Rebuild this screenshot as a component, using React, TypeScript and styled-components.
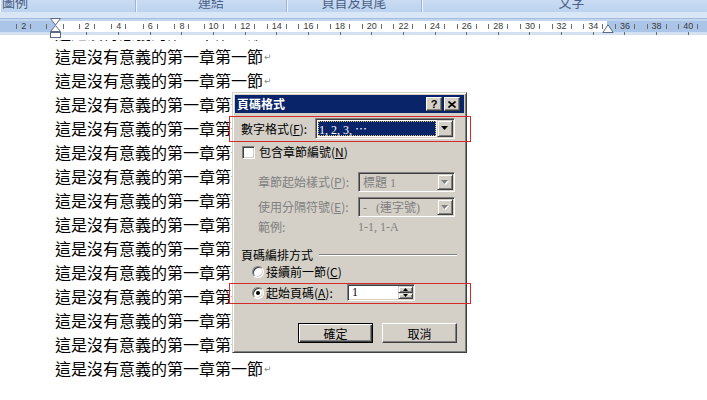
import React from "react";
import styled, { createGlobalStyle } from "styled-components";

const GlobalStyle = createGlobalStyle`
  html, body { margin: 0; padding: 0; background: #fff; }
  body { width: 707px; height: 400px; overflow: hidden; font-family: "Noto Sans CJK TC", sans-serif; }
`;

const Screen = styled.div`
  position: relative;
  width: 707px;
  height: 400px;
  overflow: hidden;
  background: #fff;
  display: flex;
  flex-direction: column;
`;

/* ---------- header: tab strip + ruler ---------- */
const Header = styled.div`
  position: relative;
  z-index: 2;
  flex: none;
  background: #fff;
`;

const TabBar = styled.div`
  display: flex;
  height: 12px;
  background: linear-gradient(#cadcf3, #bcd2ee);
`;

const Tab = styled.div<{ $w: number; $start?: boolean }>`
  flex: 0 0 ${(p) => p.$w}px;
  box-sizing: border-box;
  display: flex;
  align-items: flex-end;
  justify-content: ${(p) => (p.$start ? "flex-start" : "center")};
  padding-left: ${(p) => (p.$start ? 2 : 0)}px;
  border-right: 1px solid #9ab3d6;
  box-shadow: inset 1px 0 0 #eef4fc;
  overflow: hidden;
`;

const TabLabel = styled.span`
  font-size: 13px;
  line-height: 13px;
  margin-bottom: 4px;
  color: #4a5f86;
  white-space: nowrap;
`;

const SubBand = styled.div`
  height: 6px;
  background: #d9e6f6;
`;

const Ruler = styled.div`
  height: 17px;
  box-sizing: border-box;
  border-top: 1px solid #a2bce0;
  padding-top: 2px;
  background: #c2d6f0;
`;

const Track = styled.div`
  height: 11px;
  display: flex;
  padding-left: 7.9px;
  background: linear-gradient(
    to right,
    #abc5e9 0 55px,
    #ffffff 55px 607px,
    #abc5e9 607px
  );
`;

const TickRow = styled.div`
  height: 3px;
  display: flex;
  padding-left: 7.9px;
  background: #d3e1f3;
`;

const PageTop = styled.div`
  height: 5px;
  background: #fff;
`;

const Cell = styled.div`
  flex: 0 0 31.65px;
  display: flex;
  align-items: center;
  justify-content: center;
  gap: 4px;
`;

const Num = styled.span`
  font-family: "Liberation Sans", Arial, sans-serif;
  font-size: 9px;
  line-height: 11px;
  color: #3a3a3a;
`;

const Tick = styled.span<{ $h?: number }>`
  width: 1px;
  height: ${(p) => p.$h ?? 5}px;
  background: #6b6b6b;
`;

const MarkerSvg = styled.svg<{ $left: number; $top: number }>`
  position: absolute;
  left: ${(p) => p.$left}px;
  top: ${(p) => p.$top}px;
  z-index: 3;
`;

/* ---------- document ---------- */
const Document = styled.div`
  flex: 1;
  overflow: hidden;
  position: relative;
  z-index: 1;
`;

const Lines = styled.div`
  margin-top: -20px;
  padding-left: 55px;
`;

const Line = styled.div`
  height: 24px;
  font-family: "Noto Sans CJK TC", sans-serif;
  font-size: 16px;
  line-height: 24px;
  color: #000;
  white-space: nowrap;
`;

const Pilcrow = styled.span`
  font-family: "DejaVu Sans", sans-serif;
  font-size: 9px;
  color: #8a8a8a;
  vertical-align: 3px;
  margin-left: 1px;
`;

/* ---------- dialog ---------- */
const Dialog = styled.div`
  position: absolute;
  left: 232px;
  top: 92px;
  width: 235px;
  height: 261px;
  box-sizing: border-box;
  z-index: 4;
  background: #d4d0c8;
  border: 1px solid;
  border-color: #d4d0c8 #404040 #404040 #d4d0c8;
  box-shadow: inset 1px 1px #fff, inset -1px -1px #808080;
  padding: 2px;
  display: flex;
  flex-direction: column;
  font-family: "Noto Sans CJK TC", sans-serif;
  font-size: 12px;
  color: #000;
`;

const TitleBar = styled.div`
  height: 18px;
  flex: none;
  background: #0a246a;
  display: flex;
  align-items: center;
  padding: 0 4px 0 2px;
`;

const TitleText = styled.span`
  flex: 1;
  color: #fff;
  font-weight: bold;
  font-size: 12px;
  line-height: 14px;
`;

const CapButton = styled.div<{ $gap?: number }>`
  width: 16px;
  height: 14px;
  box-sizing: border-box;
  margin-left: ${(p) => p.$gap ?? 0}px;
  background: #d4d0c8;
  border: 1px solid;
  border-color: #fff #404040 #404040 #fff;
  box-shadow: inset -1px -1px #808080;
  display: flex;
  align-items: center;
  justify-content: center;
  font-family: "Liberation Sans", Arial, sans-serif;
  font-weight: bold;
  font-size: 11px;
  line-height: 11px;
`;

const Body = styled.div`
  flex: 1;
  display: flex;
  flex-direction: column;
  padding: 0 7px 0 6px;
`;

const Row = styled.div<{ $mt: number; $h: number; $indent?: number; $end?: boolean }>`
  flex: none;
  display: flex;
  align-items: center;
  justify-content: ${(p) => (p.$end ? "flex-end" : "flex-start")};
  margin-top: ${(p) => p.$mt}px;
  height: ${(p) => p.$h}px;
  padding-left: ${(p) => p.$indent ?? 0}px;
`;

const Label = styled.span<{ $w?: number; $disabled?: boolean }>`
  ${(p) => (p.$w ? `width: ${p.$w}px; flex: none;` : "")}
  color: ${(p) => (p.$disabled ? "#808080" : "#000")};
  white-space: nowrap;
  font-size: 12px;
  line-height: 14px;
`;

const SerifText = styled.span<{ $disabled?: boolean }>`
  font-family: "Liberation Serif", "Noto Sans CJK TC", serif;
  font-size: 12px;
  line-height: 14px;
  color: ${(p) => (p.$disabled ? "#808080" : "#000")};
  white-space: nowrap;
`;

const Combo = styled.div<{ $w: number; $disabled?: boolean }>`
  width: ${(p) => p.$w}px;
  height: 100%;
  box-sizing: border-box;
  display: flex;
  padding: 1px;
  background: ${(p) => (p.$disabled ? "#d4d0c8" : "#fff")};
  border: 1px solid;
  border-color: #808080 #fff #fff #808080;
  box-shadow: inset 1px 1px #404040, inset -1px -1px #d4d0c8;
`;

const Field = styled.div`
  flex: 1;
  display: flex;
  align-items: center;
  padding: 1px;
  min-width: 0;
`;

const Selected = styled.div`
  flex: 1;
  align-self: stretch;
  display: flex;
  align-items: center;
  padding-left: 1px;
  background: #0a246a;
  color: #fff;
  outline: 1px dotted #d8c27a;
  outline-offset: -1px;
  font-family: "Liberation Serif", "Noto Sans CJK TC", serif;
  font-size: 12px;
`;

const PlainValue = styled.div<{ $disabled?: boolean }>`
  padding-left: 2px;
  color: ${(p) => (p.$disabled ? "#808080" : "#000")};
  font-family: "Liberation Serif", "Noto Sans CJK TC", serif;
  font-size: 12px;
  white-space: nowrap;
`;

const DropButton = styled.div`
  flex: 0 0 16px;
  box-sizing: border-box;
  background: #d4d0c8;
  border: 1px solid;
  border-color: #d4d0c8 #404040 #404040 #d4d0c8;
  box-shadow: inset 1px 1px #fff, inset -1px -1px #808080;
  display: flex;
  align-items: center;
  justify-content: center;
`;

const Check = styled.div`
  width: 13px;
  height: 13px;
  box-sizing: border-box;
  flex: none;
  margin-right: 4px;
  background: #fff;
  border: 1px solid;
  border-color: #808080 #fff #fff #808080;
  box-shadow: inset 1px 1px #404040, inset -1px -1px #d4d0c8;
`;

const Radio = styled.div<{ $on?: boolean }>`
  width: 12px;
  height: 12px;
  box-sizing: border-box;
  flex: none;
  margin-right: 2px;
  border-radius: 50%;
  background: #fff;
  border: 1px solid;
  border-color: #808080 #fff #fff #808080;
  box-shadow: inset 1px 1px #404040, inset -1px -1px #d4d0c8;
  display: flex;
  align-items: center;
  justify-content: center;
  &::after {
    content: "";
    display: ${(p) => (p.$on ? "block" : "none")};
    width: 4px;
    height: 4px;
    border-radius: 50%;
    background: #000;
  }
`;

const GroupLine = styled.div`
  flex: 1;
  margin-left: 6px;
  height: 0;
  border-top: 1px solid #808080;
  border-bottom: 1px solid #fff;
`;

const Spin = styled.div`
  width: 68px;
  height: 17px;
  box-sizing: border-box;
  display: flex;
  padding: 1px;
  background: #fff;
  border: 1px solid;
  border-color: #808080 #fff #fff #808080;
  box-shadow: inset 1px 1px #404040, inset -1px -1px #d4d0c8;
`;

const SpinButtons = styled.div`
  flex: 0 0 15px;
  display: flex;
  flex-direction: column;
`;

const SpinBtn = styled.div`
  flex: 1;
  box-sizing: border-box;
  background: #d4d0c8;
  border: 1px solid;
  border-color: #d4d0c8 #404040 #404040 #d4d0c8;
  box-shadow: inset 1px 1px #fff, inset -1px -1px #808080;
  display: flex;
  align-items: center;
  justify-content: center;
`;

const PushButton = styled.div<{ $default?: boolean; $gap?: number }>`
  width: 75px;
  height: 20px;
  box-sizing: border-box;
  margin-left: ${(p) => p.$gap ?? 0}px;
  background: #d4d0c8;
  display: flex;
  align-items: center;
  justify-content: center;
  font-size: 12px;
  border: 1px solid;
  border-color: ${(p) => (p.$default ? "#000" : "#fff #404040 #404040 #fff")};
  box-shadow: ${(p) =>
    p.$default
      ? "inset 1px 1px #fff, inset -1px -1px #404040, inset -2px -2px #808080"
      : "inset -1px -1px #808080"};
`;

/* ---------- annotations ---------- */
const RedBox = styled.div<{ $top: number; $h: number }>`
  position: absolute;
  left: 229px;
  top: ${(p) => p.$top}px;
  width: 242px;
  height: ${(p) => p.$h}px;
  box-sizing: border-box;
  border: 1px solid #d42a2a;
  z-index: 5;
  pointer-events: none;
`;

const Arrow = ({ disabled }: { disabled?: boolean }) => (
  <svg width="8" height="5" viewBox="0 0 8 5">
    {disabled && <path d="M1 1h7l-3.5 4z" fill="#fff" />}
    <path d="M0 0h7l-3.5 4z" fill={disabled ? "#808080" : "#000"} />
  </svg>
);

const SmallTri = ({ up }: { up?: boolean }) => (
  <svg width="5" height="3" viewBox="0 0 5 3">
    <path d={up ? "M0 3h5L2.5 0z" : "M0 0h5L2.5 3z"} fill="#000" />
  </svg>
);

const U = styled.span`
  text-decoration: underline;
`;

const rulerCells = Array.from({ length: 22 }, (_, i) => i - 1);
const LINE = "這是沒有意義的第一章第一節";

export default function App() {
  return (
    <>
      <GlobalStyle />
      <Screen>
        <Header>
          <TabBar>
            <Tab $w={136} $start>
              <TabLabel>圖例</TabLabel>
            </Tab>
            <Tab $w={151}>
              <TabLabel>連結</TabLabel>
            </Tab>
            <Tab $w={135}>
              <TabLabel>頁首及頁尾</TabLabel>
            </Tab>
            <Tab $w={300}>
              <TabLabel>文字</TabLabel>
            </Tab>
          </TabBar>
          <SubBand />
          <Ruler>
            <Track>
              {rulerCells.map((k) => (
                <Cell key={k}>
                  <Tick />
                  {k === 0 ? <span style={{ width: 8 }} /> : <Num>{k === -1 ? 2 : k * 2}</Num>}
                  <Tick />
                </Cell>
              ))}
            </Track>
            <TickRow>
              {rulerCells.map((k) => (
                <Cell key={k}>{k >= 1 && <Tick $h={3} />}</Cell>
              ))}
            </TickRow>
          </Ruler>
          <PageTop />
          <MarkerSvg $left={50} $top={18} width="11" height="21" viewBox="0 0 11 21">
            <path d="M0.5 0.5h10L5.5 7z" fill="#fff" stroke="#5d6b82" />
            <path d="M5.5 7.5L0.5 13.5h10z" fill="#fff" stroke="#5d6b82" />
            <rect x="0.5" y="14.5" width="10" height="5" fill="#fff" stroke="#5d6b82" />
          </MarkerSvg>
          <MarkerSvg $left={602} $top={24} width="12" height="10" viewBox="0 0 12 10">
            <path d="M6 0.8L11.2 8.5H0.8z" fill="#fff" stroke="#5d6b82" />
          </MarkerSvg>
        </Header>

        <Document>
          <Lines>
            {Array.from({ length: 15 }, (_, i) => (
              <Line key={i}>
                {LINE}
                <Pilcrow>↵</Pilcrow>
              </Line>
            ))}
          </Lines>
        </Document>

        <Dialog>
          <TitleBar>
            <TitleText>頁碼格式</TitleText>
            <CapButton>?</CapButton>
            <CapButton $gap={2}>
              <svg width="8" height="7" viewBox="0 0 8 7">
                <path d="M0.5 0.5l7 6M7.5 0.5l-7 6" stroke="#000" strokeWidth="1.6" />
              </svg>
            </CapButton>
          </TitleBar>
          <Body>
            <Row $mt={5} $h={21}>
              <Label $w={74}>
                數字格式(<U>F</U>):
              </Label>
              <Combo $w={140}>
                <Field>
                  <Selected>1, 2, 3, ⋯</Selected>
                </Field>
                <DropButton>
                  <Arrow />
                </DropButton>
              </Combo>
            </Row>
            <Row $mt={5} $h={16} $indent={1}>
              <Check />
              <Label>
                包含章節編號(<U>N</U>)
              </Label>
            </Row>
            <Row $mt={12} $h={20} $indent={17}>
              <Label $w={100} $disabled>
                章節起始樣式(<U>P</U>):
              </Label>
              <Combo $w={97} $disabled>
                <Field>
                  <PlainValue $disabled>標題 1</PlainValue>
                </Field>
                <DropButton>
                  <Arrow disabled />
                </DropButton>
              </Combo>
            </Row>
            <Row $mt={5} $h={20} $indent={17}>
              <Label $w={100} $disabled>
                使用分隔符號(<U>E</U>):
              </Label>
              <Combo $w={97} $disabled>
                <Field>
                  <PlainValue $disabled>-&nbsp;&nbsp;&nbsp;(連字號)</PlainValue>
                </Field>
                <DropButton>
                  <Arrow disabled />
                </DropButton>
              </Combo>
            </Row>
            <Row $mt={3} $h={14} $indent={17}>
              <Label $w={100} $disabled>
                範例:
              </Label>
              <SerifText $disabled>1-1, 1-A</SerifText>
            </Row>
            <Row $mt={13} $h={16}>
              <Label>頁碼編排方式</Label>
              <GroupLine />
            </Row>
            <Row $mt={1} $h={16} $indent={11}>
              <Radio />
              <Label>
                接續前一節(<U>C</U>)
              </Label>
            </Row>
            <Row $mt={4} $h={17} $indent={11}>
              <Radio $on />
              <Label $w={81}>
                起始頁碼(<U>A</U>):
              </Label>
              <Spin>
                <Field>
                  <PlainValue>1</PlainValue>
                </Field>
                <SpinButtons>
                  <SpinBtn>
                    <SmallTri up />
                  </SpinBtn>
                  <SpinBtn>
                    <SmallTri />
                  </SpinBtn>
                </SpinButtons>
              </Spin>
            </Row>
            <Row $mt={22} $h={20} $end>
              <PushButton $default>確定</PushButton>
              <PushButton $gap={9}>取消</PushButton>
            </Row>
          </Body>
        </Dialog>

        <RedBox $top={116} $h={26} />
        <RedBox $top={283} $h={21} />
      </Screen>
    </>
  );
}
